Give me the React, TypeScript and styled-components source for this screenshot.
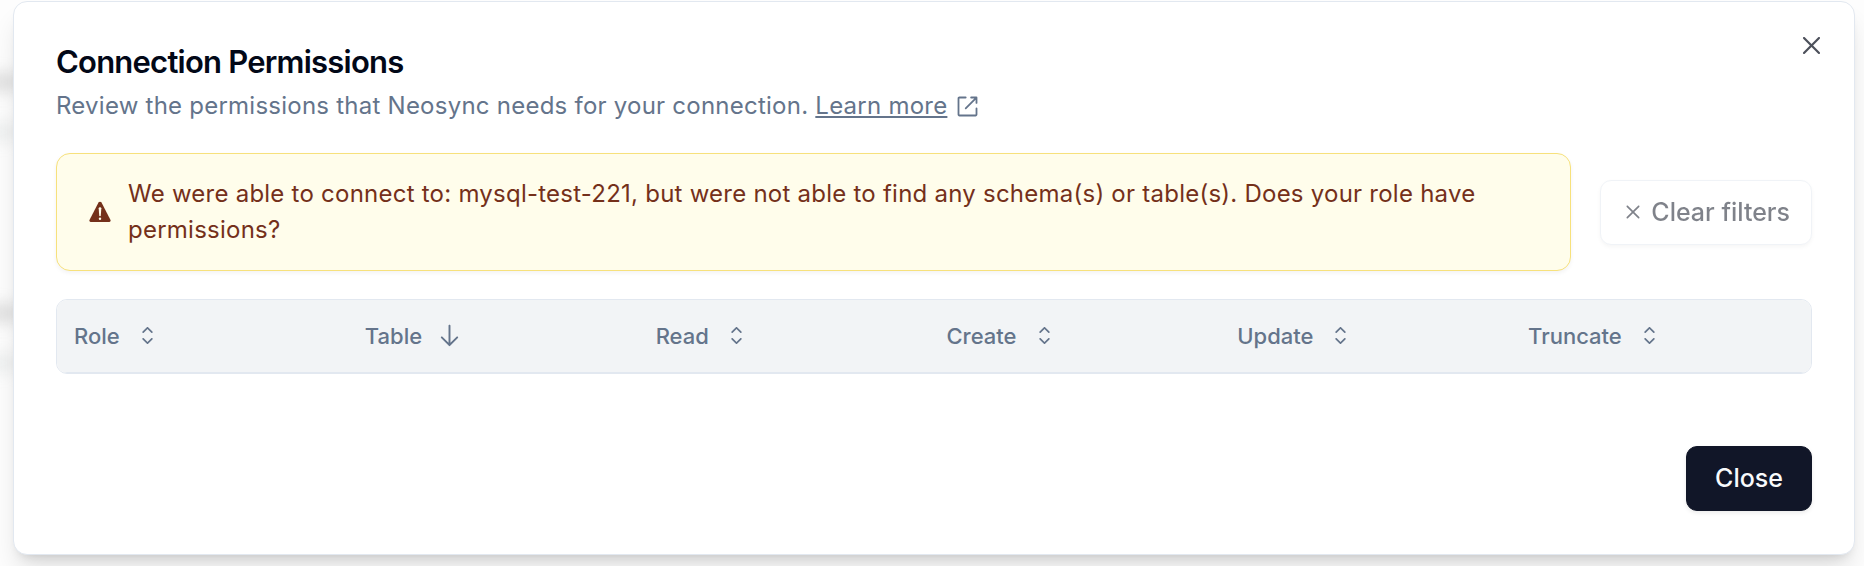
import React from 'react';
import styled, { createGlobalStyle } from 'styled-components';
import { RxArrowDown, RxCaretSort, RxCross2, RxExternalLink } from 'react-icons/rx';

const GlobalStyle = createGlobalStyle`
  *, *::before, *::after { box-sizing: border-box; }
  body {
    margin: 0;
    background: #fdfdfd;
    color: #020817;
    font-family: Inter, 'Liberation Sans', sans-serif;
    font-size: 24px;
    line-height: 36px;
    -webkit-font-smoothing: antialiased;
  }
`;

const Backdrop = styled.div`
  position: relative;
  overflow: hidden;
  padding: 1px 9px 11px 13px;
`;

const Smudge = styled.span<{ $top: number; $color: string }>`
  position: absolute;
  left: -20px;
  top: ${(p) => p.$top}px;
  width: 40px;
  height: 16px;
  background: ${(p) => p.$color};
  filter: blur(8px);
`;

const Dialog = styled.section`
  position: relative;
  display: flex;
  flex-direction: column;
  padding: 42px 42px 43px;
  background: #ffffff;
  border: 1px solid #e2e8f0;
  border-radius: 14px;
  box-shadow: 0 18px 27px -5px rgba(0, 0, 0, 0.12), 0 7px 11px -7px rgba(0, 0, 0, 0.16);
`;

const Title = styled.h2`
  margin: 0;
  font-size: 31px;
  line-height: 36px;
  font-weight: 600;
  letter-spacing: -0.025em;
`;

const Description = styled.p`
  display: flex;
  align-items: center;
  gap: 7px;
  margin: 8px 0 0;
  color: #64748b;
  letter-spacing: 0.01em;
`;

const LearnLink = styled.a`
  display: inline-flex;
  align-items: center;
  gap: 7px;
  color: inherit;
  text-decoration: none;
  span {
    text-decoration: underline;
    text-underline-offset: 2px;
    text-decoration-thickness: 2px;
  }
`;

const Toolbar = styled.div`
  display: flex;
  align-items: center;
  gap: 29px;
  margin: 29px 0 28px;
`;

const Alert = styled.div`
  flex: 1;
  display: flex;
  align-items: center;
  gap: 17px;
  padding: 22px 32px;
  color: #74301a;
  background: #fffdeb;
  border: 1px solid #f7e17c;
  border-radius: 14px;
  box-shadow: 0 2px 4px rgba(0, 0, 0, 0.05);
  letter-spacing: 0.01em;
  p { margin: 0; }
  svg { flex: none; }
`;

const Button = styled.button<{ $primary?: boolean }>`
  display: inline-flex;
  align-items: center;
  justify-content: center;
  gap: 7px;
  height: 65px;
  padding: 0 ${(p) => (p.$primary ? 28 : 21)}px;
  font: inherit;
  font-size: 25px;
  font-weight: 500;
  white-space: nowrap;
  color: ${(p) => (p.$primary ? '#f8fafc' : '#020817')};
  background: ${(p) => (p.$primary ? '#111628' : '#ffffff')};
  border: 1px solid ${(p) => (p.$primary ? '#111628' : '#e2e8f0')};
  border-radius: 11px;
  box-shadow: 0 2px 4px rgba(0, 0, 0, 0.08);
  &:disabled { opacity: 0.5; }
`;

const TableFrame = styled.div`
  overflow: hidden;
  border: 1px solid #e2e8f0;
  border-radius: 11px;
`;

const Table = styled.table`
  width: 100%;
  table-layout: fixed;
  border-collapse: collapse;
`;

const HeaderCell = styled.th`
  width: 16.58%;
  height: 72px;
  padding: 0 0 0 17px;
  background: #f2f4f6;
  border-bottom: 1px solid #e2e8f0;
  text-align: left;
  &:last-child { width: auto; }
`;

const SortButton = styled.button`
  display: flex;
  align-items: center;
  gap: 13px;
  padding: 0;
  border: 0;
  background: none;
  color: #64748b;
  font: inherit;
  font-size: 22px;
  font-weight: 500;
`;

const Footer = styled.footer`
  display: flex;
  justify-content: flex-end;
  margin-top: 72px;
`;

const DismissButton = styled.button`
  position: absolute;
  top: 29px;
  right: 28px;
  display: flex;
  padding: 0;
  border: 0;
  background: none;
  color: #020817;
  opacity: 0.7;
`;

const WarningIcon = () => (
  <svg width="22" height="22" viewBox="0 0 22 22" aria-hidden="true">
    <path
      d="M9.5 1.6a1.7 1.7 0 0 1 3 0l9 17.4a1.4 1.4 0 0 1-1.2 2H1.7a1.4 1.4 0 0 1-1.2-2z"
      fill="#74301a"
    />
    <path d="M9.7 7.2q0-.9 1.3-.9t1.3.9l-.5 7.4q-.1.6-.8.6t-.8-.6z" fill="#fffdeb" />
    <circle cx="11" cy="17.7" r="1.2" fill="#fffdeb" />
  </svg>
);

const columns = ['Role', 'Table', 'Read', 'Create', 'Update', 'Truncate'];
const sortedColumn = 'Table';

export default function App() {
  return (
    <>
      <GlobalStyle />
      <Backdrop>
        <Smudge $top={74} $color="#dcdcdc" />
        <Smudge $top={124} $color="#eceeee" />
        <Smudge $top={305} $color="#dcdcdc" />
        <Smudge $top={355} $color="#eceeee" />
        <Dialog role="dialog" aria-labelledby="dialog-title">
          <Title id="dialog-title">Connection Permissions</Title>
          <Description>
            Review the permissions that Neosync needs for your connection.
            <LearnLink href="#learn-more">
              <span>Learn more</span>
              <RxExternalLink size={27} aria-hidden="true" />
            </LearnLink>
          </Description>
          <Toolbar>
            <Alert role="alert">
              <WarningIcon />
              <p>
                We were able to connect to: mysql-test-221, but were not able to find any schema(s)
                or table(s). Does your role have permissions?
              </p>
            </Alert>
            <Button type="button" disabled>
              <RxCross2 size={22} aria-hidden="true" />
              Clear filters
            </Button>
          </Toolbar>
          <TableFrame>
            <Table>
              <thead>
                <tr>
                  {columns.map((name) => (
                    <HeaderCell key={name} scope="col">
                      <SortButton type="button">
                        {name}
                        {name === sortedColumn ? (
                          <RxArrowDown size={29} aria-hidden="true" />
                        ) : (
                          <RxCaretSort size={29} aria-hidden="true" />
                        )}
                      </SortButton>
                    </HeaderCell>
                  ))}
                </tr>
              </thead>
            </Table>
          </TableFrame>
          <Footer>
            <Button type="button" $primary>
              Close
            </Button>
          </Footer>
          <DismissButton type="button" aria-label="Close dialog">
            <RxCross2 size={29} aria-hidden="true" />
          </DismissButton>
        </Dialog>
      </Backdrop>
    </>
  );
}
